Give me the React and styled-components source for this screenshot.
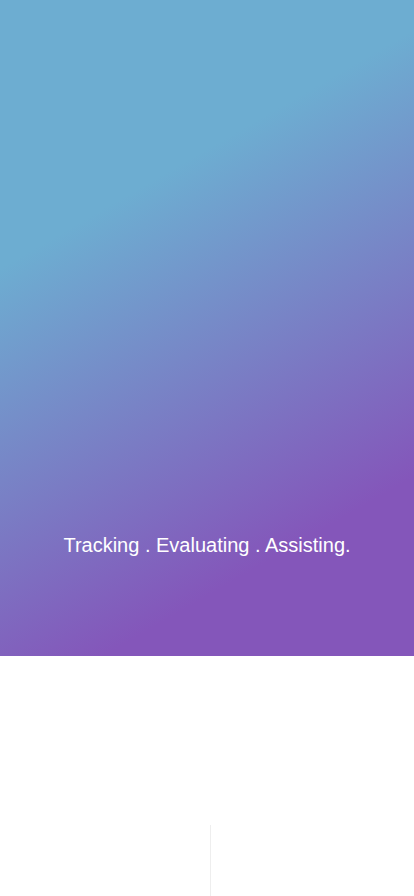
import React from 'react'
import styled, { createGlobalStyle } from 'styled-components'

const GlobalStyle = createGlobalStyle`
  html, body {
    margin: 0;
    padding: 0;
    background: #ffffff;
    font-family: "Liberation Sans", Arial, sans-serif;
  }
`

const Page = styled.div`
  width: 414px;
  height: 896px;
  display: flex;
  flex-direction: column;
  overflow: hidden;
`

const Hero = styled.div`
  height: 656px;
  display: flex;
  flex-direction: column;
  justify-content: flex-end;
  align-items: center;
  padding-bottom: 99px;
  box-sizing: border-box;
  background: linear-gradient(150deg, #6dadd1 30%, #8456ba 80%);
`

const Tagline = styled.p`
  margin: 0;
  color: #ffffff;
  font-size: 20px;
  line-height: 24px;
`

const Spacer = styled.div`
  flex: 1;
`

const Footer = styled.div`
  height: 71px;
  display: flex;
`

const FooterHalf = styled.div`
  flex: ${p => (p.divided ? '1' : '0 0 210px')};
  border-left: ${p => (p.divided ? '1px solid #eeeeee' : 'none')};
`

export default function App() {
  return (
    <Page>
      <GlobalStyle />
      <Hero>
        <Tagline>Tracking . Evaluating . Assisting.</Tagline>
      </Hero>
      <Spacer />
      <Footer>
        <FooterHalf />
        <FooterHalf divided />
      </Footer>
    </Page>
  )
}
